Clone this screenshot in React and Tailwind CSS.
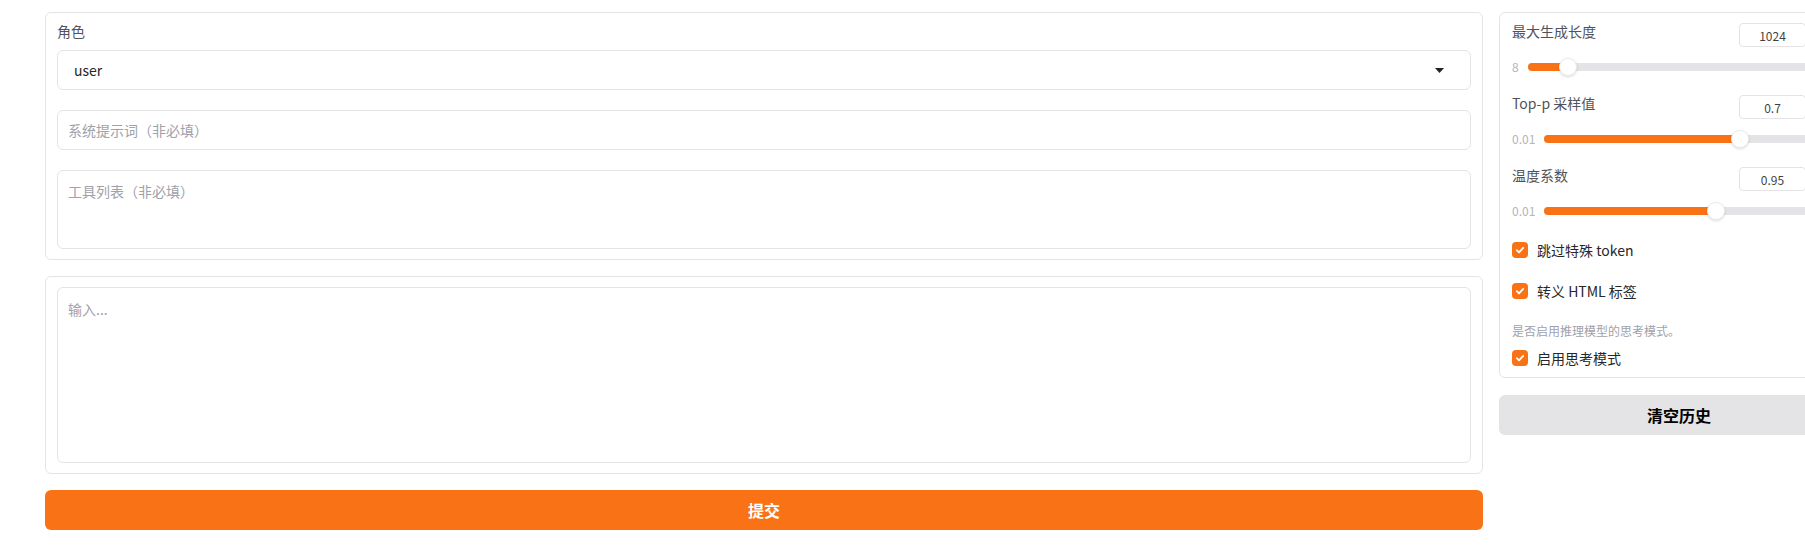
import React from 'react';

const sliders = [
  { label: '最大生成长度', value: '1024', min: '8', pct: 13.6 },
  { label: 'Top-p 采样值', value: '0.7', min: '0.01', pct: 70.3 },
  { label: '温度系数', value: '0.95', min: '0.01', pct: 61.6 },
];

const Check = () => (
  <span className="flex h-[16px] w-[16px] shrink-0 items-center justify-center rounded-[4px] bg-[#f97316]">
    <svg width="10" height="10" viewBox="0 0 10 10" fill="none">
      <path d="M1.8 5.2 L4 7.3 L8.2 2.8" stroke="white" strokeWidth="1.8" strokeLinecap="round" strokeLinejoin="round" />
    </svg>
  </span>
);

const CheckRow = ({ text, className = '' }) => (
  <label className={`flex h-[20px] items-center gap-[9px] text-sm leading-[20px] text-[#27272a] ${className}`}>
    <Check />
    <span>{text}</span>
  </label>
);

const SliderBlock = ({ s, last }) => (
  <div className={last ? '' : 'mb-[19px]'}>
    <div className="flex h-[24px] items-start">
      <span className="flex-1 text-sm leading-[16px] text-[#52525b]">{s.label}</span>
      <input
        readOnly
        value={s.value}
        className="h-[24px] w-[67px] rounded-[4px] border border-[#e4e4e7] text-center text-xs text-[#3f3f46] outline-none"
      />
      <span className="ml-[8px] w-[32px]" />
    </div>
    <div className="mt-[11px] flex h-[18px] items-center gap-[9px]">
      <span className="text-xs leading-[16px] text-[#b4b4bb]">{s.min}</span>
      <div className="relative h-[8px] flex-1 rounded-full bg-[#e4e4e7]">
        <div className="h-full rounded-full bg-[#f97316]" style={{ width: `${s.pct}%` }} />
        <div
          className="absolute top-1/2 h-[18px] w-[18px] -translate-x-1/2 -translate-y-1/2 rounded-full border border-[#ececec] bg-white shadow-[0_1px_3px_rgba(0,0,0,0.15)]"
          style={{ left: `${s.pct}%` }}
        />
      </div>
      <span className="w-[14px]" />
    </div>
  </div>
);

const App = () => {
  return (
    <div className="h-[546px] w-full overflow-hidden bg-white font-['Noto_Sans_CJK_SC','Noto_Sans',sans-serif]">
      <div className="flex w-[1900px] gap-[16px] pl-[45px] pt-[12px]">
        {/* left column */}
        <div className="flex w-[1438px] shrink-0 flex-col">
          <div className="flex flex-col rounded-[6px] border border-[#e4e4e7] px-[11px] py-[10px]">
            <span className="text-sm leading-[16px] text-[#52525b]">角色</span>
            <div className="mt-[11px] flex h-[40px] items-center justify-between rounded-[6px] border border-[#e4e4e7] pl-[16px] pr-[26px] text-sm text-[#27272a]">
              <span>user</span>
              <svg width="9" height="5" viewBox="0 0 9 5">
                <path d="M0 0 H9 L4.5 5 Z" fill="#222" />
              </svg>
            </div>
            <input
              placeholder="系统提示词（非必填）"
              className="mt-[20px] h-[40px] rounded-[6px] border border-[#e4e4e7] px-[10px] text-sm text-[#27272a] outline-none placeholder:text-[#a1a1aa]"
            />
            <textarea
              placeholder="工具列表（非必填）"
              className="mt-[20px] h-[79px] resize-none rounded-[6px] border border-[#e4e4e7] px-[10px] py-[10px] text-sm leading-[20px] outline-none placeholder:text-[#a1a1aa]"
            />
          </div>

          <div className="mt-[16px] flex rounded-[6px] border border-[#e4e4e7] px-[11px] py-[10px]">
            <textarea
              placeholder="输入..."
              className="h-[176px] w-full resize-none rounded-[6px] border border-[#e4e4e7] px-[10px] py-[11px] text-sm leading-[20px] outline-none placeholder:text-[#a1a1aa]"
            />
          </div>

          <button className="mt-[16px] h-[40px] rounded-[6px] bg-[#f97316] text-base font-semibold text-white">
            提交
          </button>
        </div>

        {/* right column */}
        <div className="flex w-[360px] shrink-0 flex-col">
          <div className="flex flex-col rounded-[6px] border border-[#e4e4e7] px-[12px] pb-[9px] pt-[10px]">
            {sliders.map((s, i) => (
              <SliderBlock key={s.label} s={s} last={i === sliders.length - 1} />
            ))}
            <CheckRow text="跳过特殊 token" className="mt-[20px]" />
            <CheckRow text="转义 HTML 标签" className="mt-[21px]" />
            <p className="mt-[22px] text-xs leading-[16px] text-[#a1a1aa]">是否启用推理模型的思考模式。</p>
            <CheckRow text="启用思考模式" className="mt-[9px]" />
          </div>
          <button className="mt-[17px] h-[40px] rounded-[6px] bg-[#e4e4e7] text-base font-semibold text-black">
            清空历史
          </button>
        </div>
      </div>
    </div>
  );
};

export default App;
